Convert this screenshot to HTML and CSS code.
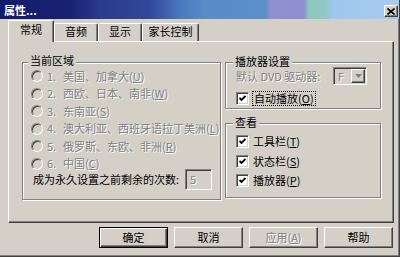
FILE: index.html
```html
<!DOCTYPE html>
<html lang="zh-CN">
<head>
<meta charset="utf-8">
<title>属性</title>
<link rel="stylesheet" href="styles.css">
</head>
<body>
<div class="window">
  <div class="titlebar">
    <span class="title">属性...</span>
    <span class="close"><svg width="8" height="7" viewBox="0 0 8 7"><path d="M0.5 0.5 L7.5 6.5 M7.5 0.5 L0.5 6.5" stroke="#000" stroke-width="1.6" fill="none"/></svg></span>
  </div>
  <div class="tabs">
    <div class="tab active">常规</div>
    <div class="tab w44">音频</div>
    <div class="tab w44">显示</div>
    <div class="tab w57">家长控制</div>
  </div>
  <div class="panel">
    <div class="group region">
      <div class="legend">当前区域</div>
      <div class="radios">
        <div class="row dis"><span class="radio"></span><span class="num">1.</span><span>美国、加拿大(<u>U</u>)</span></div>
        <div class="row dis"><span class="radio"></span><span class="num">2.</span><span>西欧、日本、南非(<u>W</u>)</span></div>
        <div class="row dis"><span class="radio"></span><span class="num">3.</span><span>东南亚(<u>S</u>)</span></div>
        <div class="row dis"><span class="radio"></span><span class="num">4.</span><span>澳大利亚、西班牙语拉丁美洲(<u>L</u>)</span></div>
        <div class="row dis"><span class="radio"></span><span class="num">5.</span><span>俄罗斯、东欧、非洲(<u>R</u>)</span></div>
        <div class="row dis"><span class="radio"></span><span class="num">6.</span><span>中国(<u>C</u>)</span></div>
      </div>
      <div class="count"><span>成为永久设置之前剩余的次数:</span><span class="field dis">5</span></div>
    </div>
    <div class="side">
      <div class="group player">
        <div class="legend">播放器设置</div>
        <div class="drive-row">
          <span class="dis">默认 DVD 驱动器:</span>
          <span class="combo"><span class="combo-text dis">F</span><span class="combo-btn"><svg width="7" height="4" viewBox="0 0 7 4"><path d="M0 0 H7 L3.5 4 Z" fill="#808080"/></svg></span></span>
        </div>
        <div class="check-row autoplay"><span class="checkbox"><svg width="7" height="7" viewBox="0 0 7 7"><path d="M0.5 3 L2.5 5 L6.5 1" stroke="#000" stroke-width="1.8" fill="none"/></svg></span><span class="focus">自动播放(<u>O</u>)</span></div>
      </div>
      <div class="group view">
        <div class="legend">查看</div>
        <div class="checks">
          <div class="check-row"><span class="checkbox"><svg width="7" height="7" viewBox="0 0 7 7"><path d="M0.5 3 L2.5 5 L6.5 1" stroke="#000" stroke-width="1.8" fill="none"/></svg></span><span>工具栏(<u>T</u>)</span></div>
          <div class="check-row"><span class="checkbox"><svg width="7" height="7" viewBox="0 0 7 7"><path d="M0.5 3 L2.5 5 L6.5 1" stroke="#000" stroke-width="1.8" fill="none"/></svg></span><span>状态栏(<u>S</u>)</span></div>
          <div class="check-row"><span class="checkbox"><svg width="7" height="7" viewBox="0 0 7 7"><path d="M0.5 3 L2.5 5 L6.5 1" stroke="#000" stroke-width="1.8" fill="none"/></svg></span><span>播放器(<u>P</u>)</span></div>
        </div>
      </div>
    </div>
  </div>
  <div class="buttons">
    <div class="btn default">确定</div>
    <div class="btn">取消</div>
    <div class="btn dis">应用(<u>A</u>)</div>
    <div class="btn">帮助</div>
  </div>
</div>
</body>
</html>
```
FILE: styles.css
```css
html, body {
  margin: 0;
  padding: 0;
}
body {
  width: 400px;
  height: 257px;
  overflow: hidden;
  background: #d4d0c8;
  font-family: "Noto Sans CJK SC", "Noto Sans", sans-serif;
  font-size: 11px;
  line-height: 13px;
  color: #000;
}
.window {
  box-sizing: border-box;
  width: 400px;
  height: 257px;
  border-right: 1px solid #404040;
  border-bottom: 1px solid #404040;
  box-shadow: inset -1px -1px 0 #808080;
  display: flex;
  flex-direction: column;
}
.titlebar {
  height: 19px;
  flex: none;
  display: flex;
  align-items: flex-start;
  justify-content: space-between;
  background: linear-gradient(90deg, #121a6c 0px, #182272 70px, #2a3a8c 100px, #33489a 150px, #4a78bc 180px, #5a8cc8 205px, #5c90ca 266px, #8e90d0 270px, #8e8ed0 304px, #8ec8c0 309px, #90c8c4 326px, #a0c6ee 332px, #a8ccf0 400px);
}
.title {
  color: #fff;
  font-weight: bold;
  font-size: 11px;
  line-height: 13px;
  margin: 4px 0 0 4px;
}
.close {
  box-sizing: border-box;
  width: 14px;
  height: 12px;
  margin: 5px 1px 0 0;
  background: #d4d0c8;
  border: 1px solid;
  border-color: #fff #404040 #404040 #fff;
  box-shadow: inset -1px -1px 0 #808080;
  display: flex;
  align-items: center;
  justify-content: center;
}
.close svg { display: block; }

.tabs {
  height: 22px;
  flex: none;
  display: flex;
  align-items: flex-end;
  padding-left: 8px;
}
.tab {
  box-sizing: border-box;
  height: 18px;
  padding-top: 1px;
  line-height: 13px;
  text-align: center;
  border-top: 1px solid #fff;
  border-left: 1px solid #fff;
  border-right: 1px solid #404040;
  border-radius: 2px 2px 0 0;
  box-shadow: inset -1px 0 0 #808080;
  background: #d4d0c8;
}
.tab.active {
  width: 46px;
  height: 22px;
  padding-top: 2px;
  margin-bottom: -1px;
  position: relative;
  z-index: 1;
}
.w44 { width: 44px; }
.w57 { width: 57px; }

.panel {
  box-sizing: border-box;
  height: 182px;
  flex: none;
  margin: 0 5px 0 8px;
  border: 1px solid;
  border-color: #fff #404040 #404040 #fff;
  box-shadow: inset -1px -1px 0 #808080;
  display: flex;
  gap: 4px;
  padding: 20px 0 0 13px;
}
.group {
  box-sizing: border-box;
  border: 1px solid #808080;
  box-shadow: inset 1px 1px 0 #fff, 1px 1px 0 #fff;
}
.legend {
  width: fit-content;
  margin: -8px 0 -1px -3px;
  padding: 0 2px;
  line-height: 12px;
  background: #d4d0c8;
}
.region .legend {
  margin-top: -9px;
}
.dis {
  color: #808080;
  text-shadow: 1px 1px 0 #fff;
}
u { text-decoration-thickness: 1px; text-underline-offset: 1px; }

.region {
  width: 199px;
  height: 138px;
  padding-left: 8px;
}
.radios { margin-top: 2.5px; }
.radios .row {
  height: 17.5px;
  display: flex;
  align-items: center;
  white-space: nowrap;
}
.radio {
  box-sizing: border-box;
  width: 12px;
  height: 12px;
  flex: none;
  border-radius: 50%;
  border: 1px solid;
  border-color: #808080 #fff #fff #808080;
  box-shadow: inset 1px 1px 0 #404040, inset -1px -1px 0 #d4d0c8;
  background: #d4d0c8;
  margin-right: 4px;
}
.num { width: 16px; flex: none; }
.count {
  display: flex;
  align-items: center;
  height: 21px;
  margin-top: -3.5px;
  padding-left: 2px;
  gap: 6px;
  white-space: nowrap;
}
.field {
  box-sizing: border-box;
  width: 27px;
  height: 21px;
  padding: 2px 0 0 4px;
  line-height: 14px;
  border: 1px solid;
  border-color: #808080 #fff #fff #808080;
  box-shadow: inset 1px 1px 0 #404040, inset -1px -1px 0 #d4d0c8;
}

.side {
  width: 156px;
  display: flex;
  flex-direction: column;
}
.player {
  height: 47px;
  padding: 0 13px 0 10px;
}
.drive-row {
  display: flex;
  align-items: center;
  height: 18px;
  margin-top: 1px;
  white-space: nowrap;
}
.combo {
  box-sizing: border-box;
  margin-left: auto;
  width: 34px;
  height: 18px;
  display: flex;
  border: 1px solid;
  border-color: #808080 #fff #fff #808080;
  box-shadow: inset 1px 1px 0 #404040;
  padding: 1px;
}
.combo-text {
  flex: 1;
  padding-left: 3px;
  line-height: 14px;
}
.combo-btn {
  box-sizing: border-box;
  width: 14px;
  height: 14px;
  border: 1px solid;
  border-color: #fff #404040 #404040 #fff;
  box-shadow: inset -1px -1px 0 #808080;
  display: flex;
  align-items: center;
  justify-content: center;
}
.combo-btn svg { display: block; }
.check-row {
  display: flex;
  align-items: center;
  white-space: nowrap;
}
.autoplay {
  height: 16px;
  margin-top: 5px;
}
.checkbox {
  box-sizing: border-box;
  width: 13px;
  height: 13px;
  flex: none;
  border: 1px solid;
  border-color: #808080 #fff #fff #808080;
  box-shadow: inset 1px 1px 0 #404040, inset -1px -1px 0 #d4d0c8;
  background: #fff;
  margin-right: 4px;
  display: flex;
  align-items: center;
  justify-content: center;
}
.checkbox svg { display: block; }
.focus {
  outline: 1px dotted #000;
  padding: 0 1px;
  line-height: 13px;
}
.view {
  height: 75px;
  margin-top: 14px;
  padding-left: 10px;
}
.checks { padding-top: 5px; }
.checks .check-row { height: 19.5px; }

.buttons {
  display: flex;
  justify-content: flex-end;
  gap: 6px;
  padding: 4px 6px 0 0;
}
.btn {
  box-sizing: border-box;
  width: 69px;
  height: 21px;
  border: 1px solid;
  border-color: #fff #404040 #404040 #fff;
  box-shadow: inset -1px -1px 0 #808080;
  display: flex;
  align-items: center;
  justify-content: center;
  white-space: nowrap;
}
.btn.default {
  border-color: #000;
  box-shadow: inset 1px 1px 0 #fff, inset -1px -1px 0 #404040, inset -2px -2px 0 #808080;
}
```
